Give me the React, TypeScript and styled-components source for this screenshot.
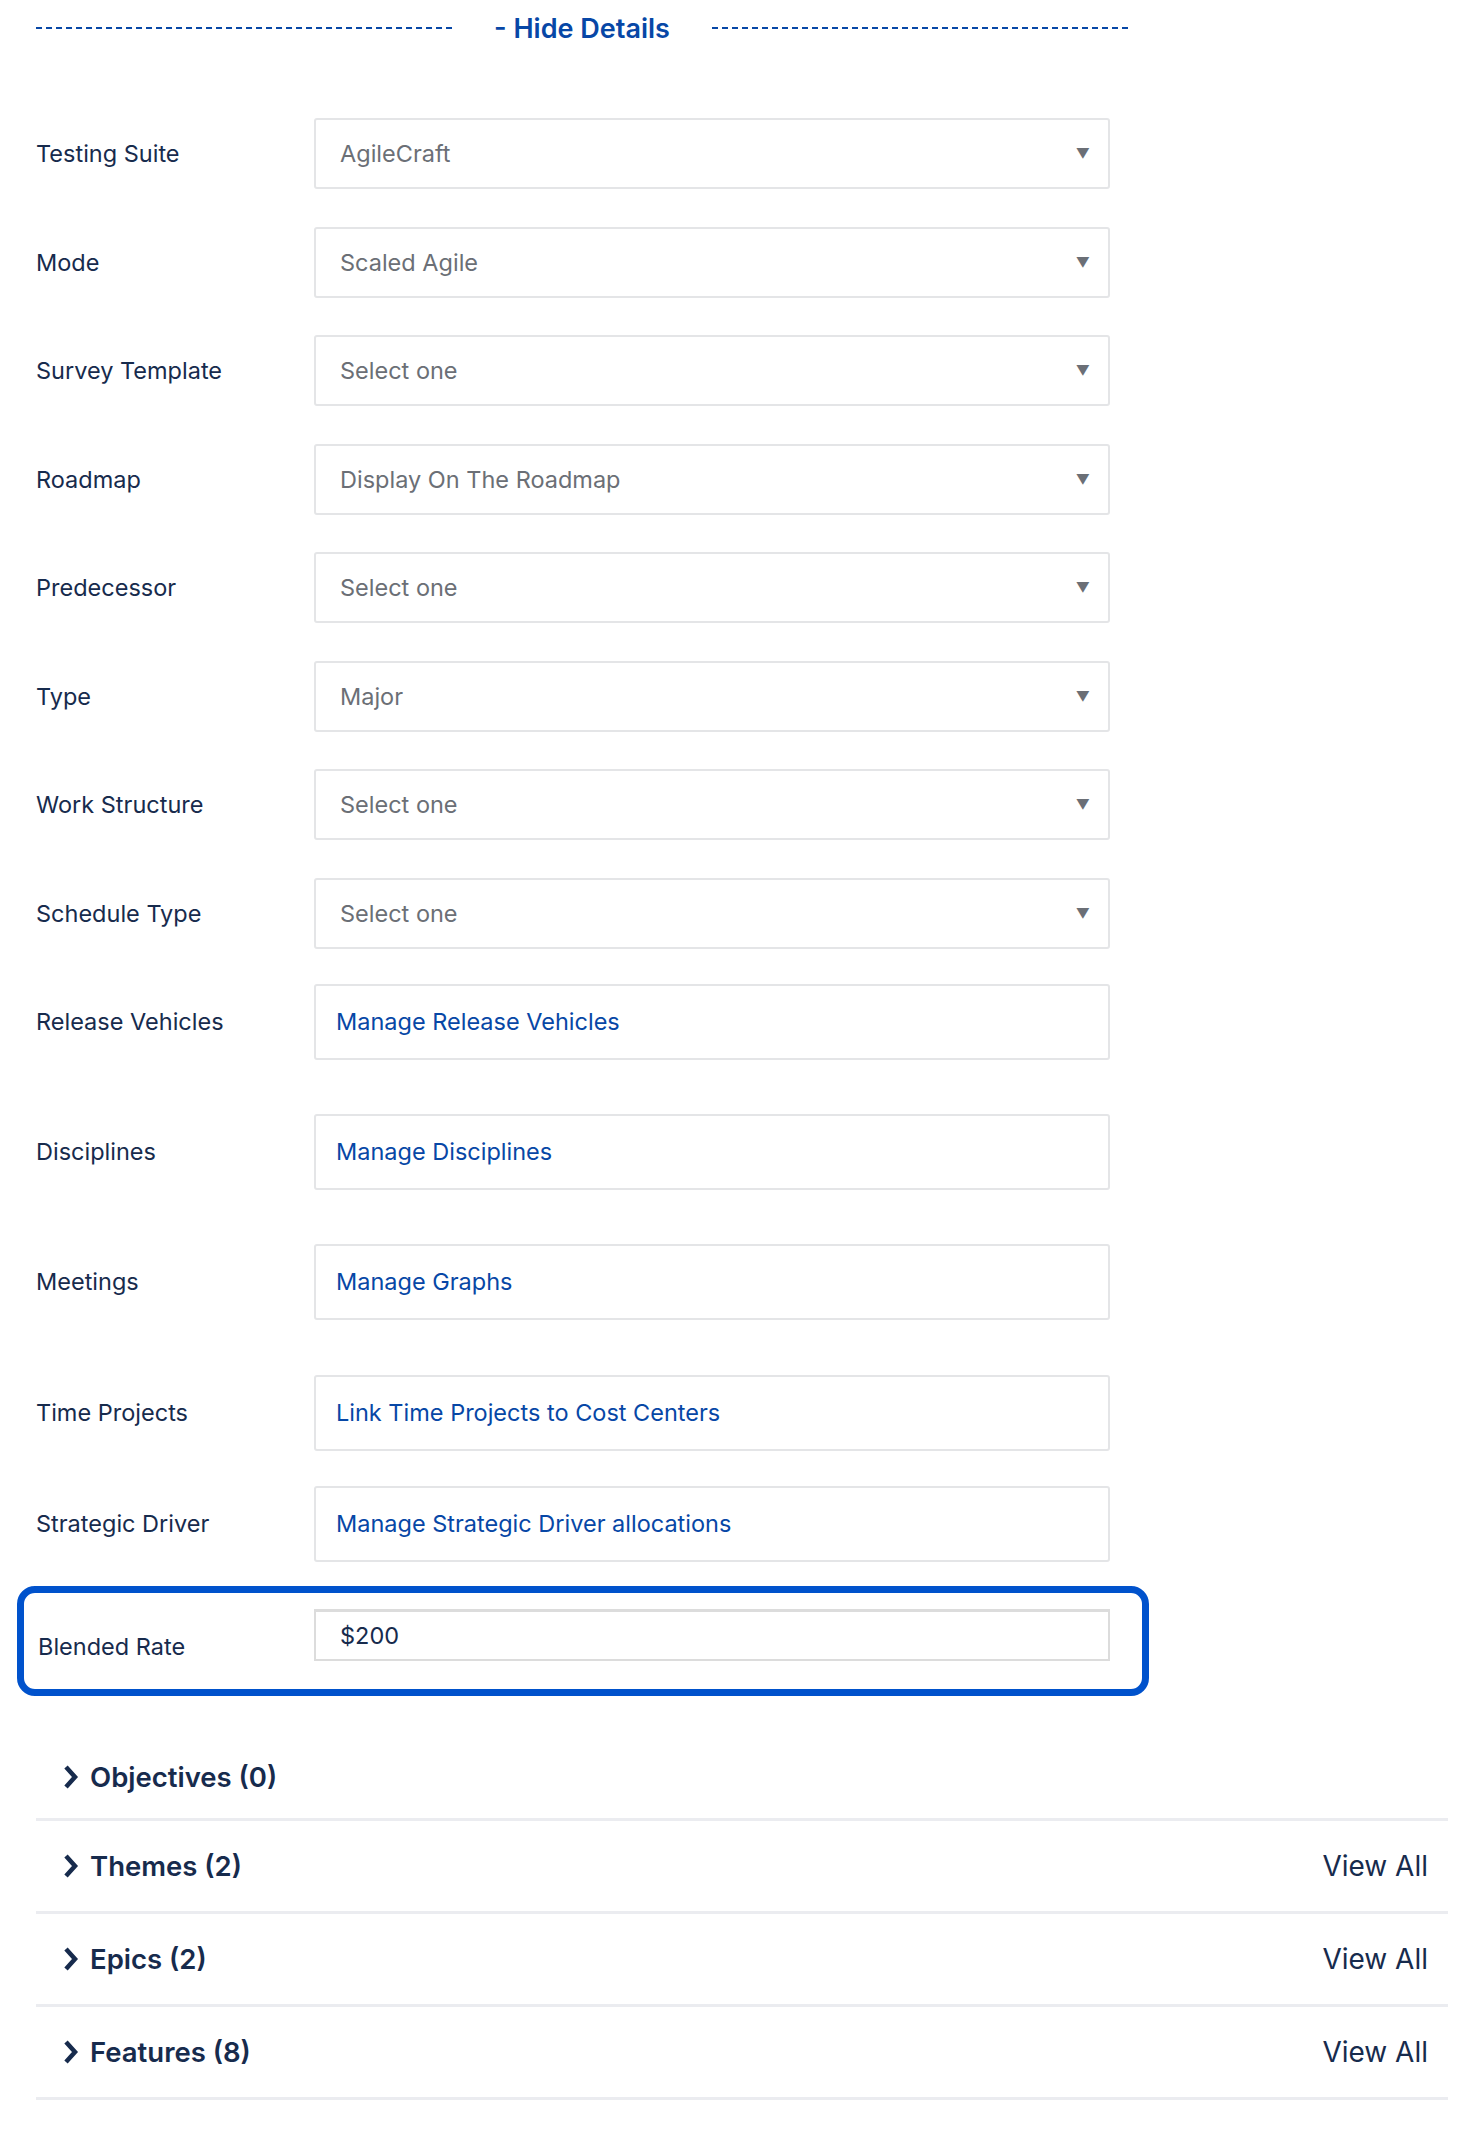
import React from "react";
import styled, { createGlobalStyle } from "styled-components";

const Global = createGlobalStyle`
  body { margin: 0; background: #fff; font-family: Inter, "Noto Sans", "Liberation Sans", sans-serif; }
`;

const Page = styled.div`
  width: 1484px;
  padding: 0 28px 0 36px;
  box-sizing: border-box;
`;

const Divider = styled.div`
  display: flex;
  align-items: center;
  width: 1092px;
  height: 56px;
  gap: 42px;
  margin-bottom: 62px;
`;

const Dash = styled.div`
  flex: 1;
  border-top: 2px dashed #0747a6;
`;

const HideText = styled.span`
  color: #0747a6;
  font-size: 27px;
  font-weight: 600;
`;

const Row = styled.div<{ $h: number }>`
  display: grid;
  grid-template-columns: 278px 796px;
  height: ${(p) => p.$h}px;
  align-items: start;
`;

const Label = styled.div<{ $boxH: number }>`
  color: #172b4d;
  font-size: 23.5px;
  height: ${(p) => p.$boxH}px;
  display: flex;
  align-items: center;
`;

const SelectBox = styled.div`
  height: 71px;
  box-sizing: border-box;
  border: 2px solid #e4e5e7;
  border-radius: 3px;
  display: flex;
  align-items: center;
  justify-content: space-between;
  padding: 0 18px 0 24px;
  color: #6b6f76;
  font-size: 23.5px;
`;

const Caret = styled.span`
  font-size: 14px;
  color: #6b6f76;
`;

const LinkBox = styled.div`
  height: 76px;
  box-sizing: border-box;
  border: 2px solid #e4e5e7;
  border-radius: 3px;
  display: flex;
  align-items: center;
  padding-left: 20px;
  color: #0747a6;
  font-size: 23.5px;
`;

const Highlight = styled.div`
  margin: 24px 0 0 -19px;
  width: 1132px;
  height: 110px;
  box-sizing: border-box;
  border: 7px solid #0052cc;
  border-radius: 18px;
  display: grid;
  grid-template-columns: 278px 796px;
  align-items: center;
  padding-left: 12px;
`;

const RateInput = styled.div`
  height: 52px;
  box-sizing: border-box;
  border: 2px solid #dcdcdc;
  border-top-width: 3px;
  display: flex;
  align-items: center;
  padding-left: 24px;
  color: #172b4d;
  font-size: 23.5px;
  margin-top: -12px;
`;

const RateLabel = styled.div`
  color: #172b4d;
  font-size: 23.5px;
  padding-top: 12px;
  padding-left: 2px;
`;

const Sections = styled.div`
  width: 1412px;
  margin-top: 40px;
`;

const Section = styled.div`
  display: flex;
  align-items: center;
  justify-content: space-between;
  height: 90px;
  border-bottom: 3px solid #ebecf0;
  padding: 0 20px 0 26px;
  &:first-child { height: 82px; }
`;

const Title = styled.div`
  display: flex;
  align-items: center;
  gap: 10px;
  color: #172b4d;
  font-size: 27.5px;
  font-weight: 600;
`;

const ViewAll = styled.span`
  color: #172b4d;
  font-size: 28px;
`;

const Chevron = () => (
  <svg width="18" height="26" viewBox="0 0 18 26">
    <path d="M4 3 L13 13 L4 23" fill="none" stroke="#172b4d" strokeWidth="4.5" />
  </svg>
);

const selects = [
  ["Testing Suite", "AgileCraft"],
  ["Mode", "Scaled Agile"],
  ["Survey Template", "Select one"],
  ["Roadmap", "Display On The Roadmap"],
  ["Predecessor", "Select one"],
  ["Type", "Major"],
  ["Work Structure", "Select one"],
  ["Schedule Type", "Select one"],
];

const links: [string, string, number][] = [
  ["Release Vehicles", "Manage Release Vehicles", 130],
  ["Disciplines", "Manage Disciplines", 130],
  ["Meetings", "Manage Graphs", 131],
  ["Time Projects", "Link Time Projects to Cost Centers", 111],
  ["Strategic Driver", "Manage Strategic Driver allocations", 76],
];

const sections: [string, boolean][] = [
  ["Objectives (0)", false],
  ["Themes (2)", true],
  ["Epics (2)", true],
  ["Features (8)", true],
];

export default function App() {
  return (
    <Page>
      <Global />
      <Divider>
        <Dash />
        <HideText>- Hide Details</HideText>
        <Dash />
      </Divider>
      {selects.map(([l, v], i) => (
        <Row key={l} $h={i === selects.length - 1 ? 106 : 108.5}>
          <Label $boxH={71}>{l}</Label>
          <SelectBox>
            {v}
            <Caret>▼</Caret>
          </SelectBox>
        </Row>
      ))}
      {links.map(([l, v, h]) => (
        <Row key={l} $h={h}>
          <Label $boxH={76}>{l}</Label>
          <LinkBox>{v}</LinkBox>
        </Row>
      ))}
      <Highlight>
        <RateLabel>Blended Rate</RateLabel>
        <RateInput>$200</RateInput>
      </Highlight>
      <Sections>
        {sections.map(([t, v]) => (
          <Section key={t}>
            <Title>
              <Chevron />
              {t}
            </Title>
            {v && <ViewAll>View All</ViewAll>}
          </Section>
        ))}
      </Sections>
    </Page>
  );
}
